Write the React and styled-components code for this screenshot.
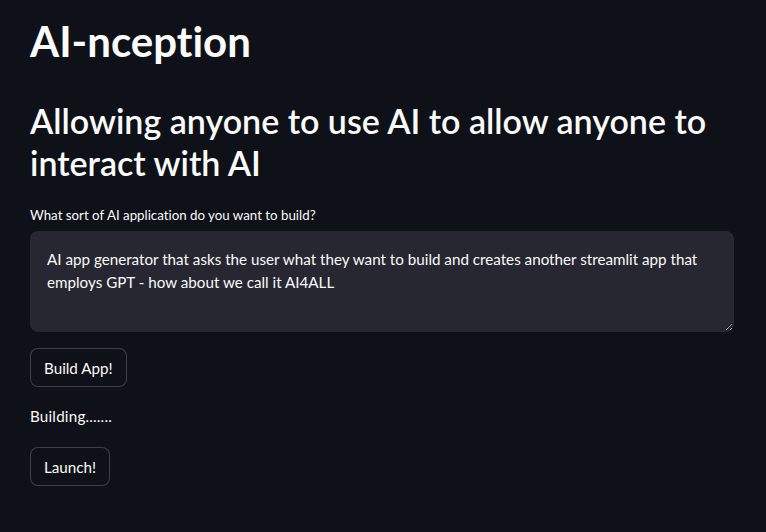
import styled, { createGlobalStyle } from 'styled-components';

const Global = createGlobalStyle`
  body {
    margin: 0;
    background: #0e1117;
    color: #fafafa;
    font-family: Lato, "Noto Sans", sans-serif;
    font-variant-ligatures: none;
  }
`;

const Main = styled.main`
  width: 704px;
  padding: 16px 32px 0 30px;
  display: flex;
  flex-direction: column;
  align-items: flex-start;
`;

const Title = styled.h1`
  margin: 0;
  font-size: 42px;
  line-height: 1.2;
  font-weight: 700;
`;

const Subtitle = styled.h2`
  margin: 34px 0 0;
  font-size: 34px;
  line-height: 42px;
  font-weight: 600;
`;

const Field = styled.label`
  margin-top: 22px;
  align-self: stretch;
  display: flex;
  flex-direction: column;
  gap: 7px;
`;

const LabelText = styled.span`
  font-size: 13.3px;
  line-height: 18px;
`;

const TextArea = styled.textarea`
  box-sizing: border-box;
  height: 101px;
  padding: 16px;
  border: 1px solid transparent;
  border-radius: 8px;
  background: #262730;
  color: #fafafa;
  font-family: inherit;
  font-variant-ligatures: none;
  font-size: 15.2px;
  line-height: 22.4px;
  outline: none;
  resize: vertical;
`;

const Button = styled.button`
  margin-top: ${p => p.$gap}px;
  height: 39px;
  padding: 0 13px;
  border: 1px solid rgba(250, 250, 250, 0.2);
  border-radius: 8px;
  background: #0e1117;
  color: #fafafa;
  font-family: inherit;
  font-variant-ligatures: none;
  font-size: 15.2px;
  line-height: 1.6;
  cursor: pointer;
`;

const Status = styled.p`
  margin: 17px 0 0;
  font-size: 15.2px;
  line-height: 24px;
  letter-spacing: 0.2px;
`;

export default function App() {
  return (
    <>
      <Global />
      <Main>
        <Title>AI-nception</Title>
        <Subtitle>Allowing anyone to use AI to allow anyone to interact with AI</Subtitle>
        <Field>
          <LabelText>What sort of AI application do you want to build?</LabelText>
          <TextArea
            readOnly
            defaultValue="AI app generator that asks the user what they want to build and creates another streamlit app that employs GPT - how about we call it AI4ALL"
          />
        </Field>
        <Button $gap={16}>Build App!</Button>
        <Status>Building.......</Status>
        <Button $gap={19}>Launch!</Button>
      </Main>
    </>
  );
}
